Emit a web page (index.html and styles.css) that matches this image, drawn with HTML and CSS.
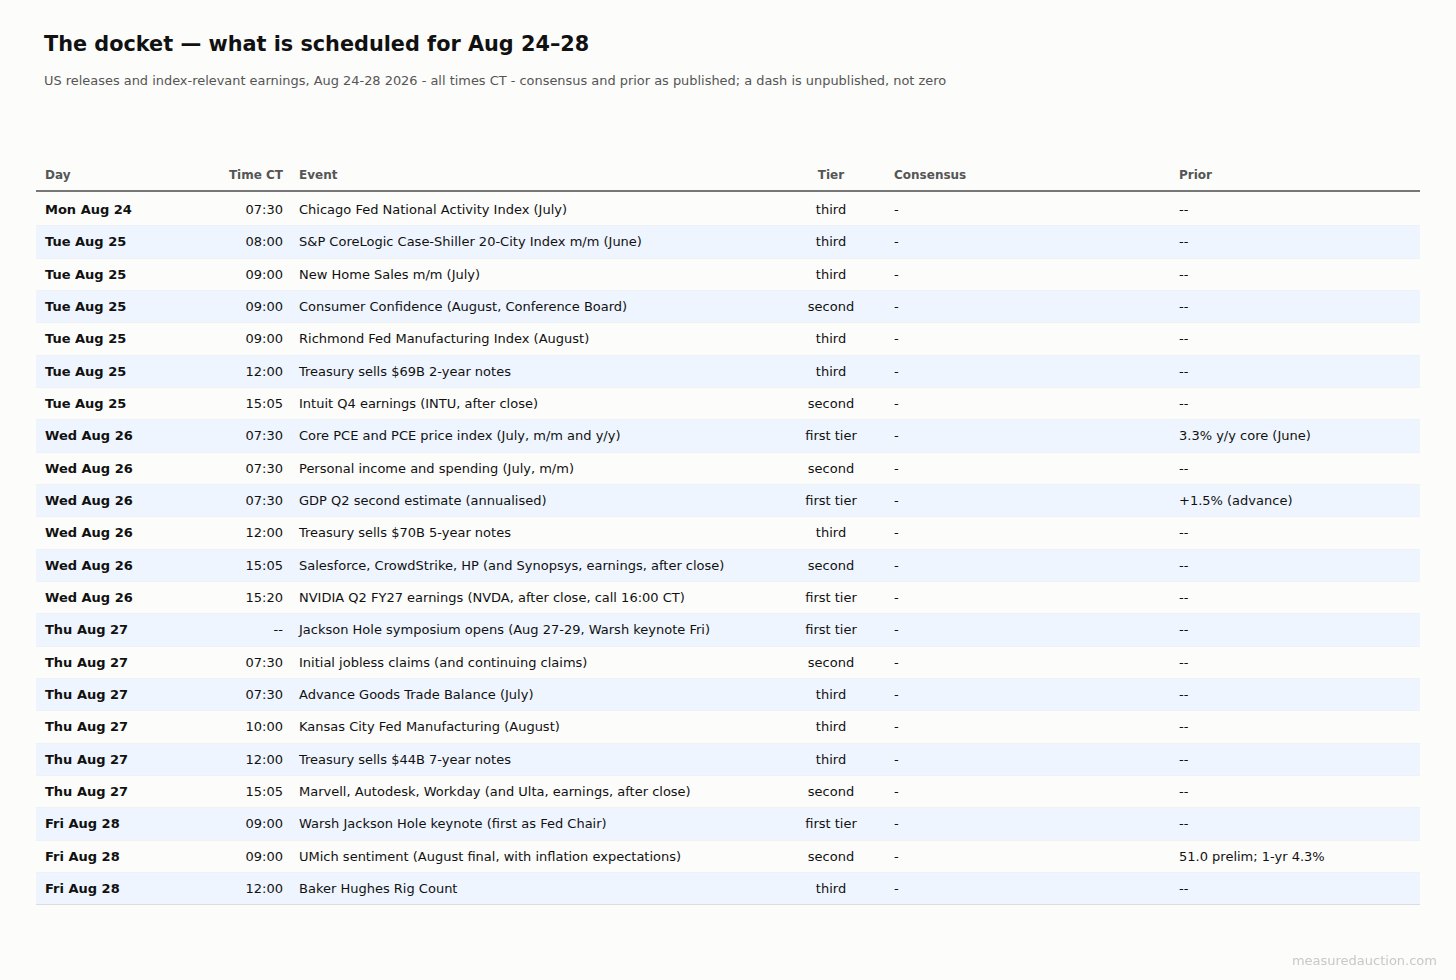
FILE: index.html
```html
<!DOCTYPE html>
<html lang="en">
<head>
<meta charset="utf-8">
<title>The docket</title>
<link rel="stylesheet" href="styles.css">
</head>
<body>
<div class="page">
  <header class="head">
    <h1 class="title">The docket — what is scheduled for Aug 24–28</h1>
    <p class="sub">US releases and index-relevant earnings, Aug 24-28 2026 - all times CT - consensus and prior as published; a dash is unpublished, not zero</p>
  </header>
  <table class="docket">
    <colgroup>
      <col class="c-day"><col class="c-time"><col class="c-event"><col class="c-tier"><col class="c-cons"><col class="c-prior">
    </colgroup>
    <thead>
      <tr><th class="l first">Day</th><th class="r">Time CT</th><th class="l">Event</th><th class="c">Tier</th><th class="l">Consensus</th><th class="l">Prior</th></tr>
    </thead>
    <tbody>
      <tr><td class="day">Mon Aug 24</td><td class="time">07:30</td><td>Chicago Fed National Activity Index (July)</td><td class="tier">third</td><td class="dash">-</td><td class="dash">--</td></tr>
      <tr><td class="day">Tue Aug 25</td><td class="time">08:00</td><td>S&amp;P CoreLogic Case-Shiller 20-City Index m/m (June)</td><td class="tier">third</td><td class="dash">-</td><td class="dash">--</td></tr>
      <tr><td class="day">Tue Aug 25</td><td class="time">09:00</td><td>New Home Sales m/m (July)</td><td class="tier">third</td><td class="dash">-</td><td class="dash">--</td></tr>
      <tr><td class="day">Tue Aug 25</td><td class="time">09:00</td><td>Consumer Confidence (August, Conference Board)</td><td class="tier">second</td><td class="dash">-</td><td class="dash">--</td></tr>
      <tr><td class="day">Tue Aug 25</td><td class="time">09:00</td><td>Richmond Fed Manufacturing Index (August)</td><td class="tier">third</td><td class="dash">-</td><td class="dash">--</td></tr>
      <tr><td class="day">Tue Aug 25</td><td class="time">12:00</td><td>Treasury sells $69B 2-year notes</td><td class="tier">third</td><td class="dash">-</td><td class="dash">--</td></tr>
      <tr><td class="day">Tue Aug 25</td><td class="time">15:05</td><td>Intuit Q4 earnings (INTU, after close)</td><td class="tier">second</td><td class="dash">-</td><td class="dash">--</td></tr>
      <tr><td class="day">Wed Aug 26</td><td class="time">07:30</td><td>Core PCE and PCE price index (July, m/m and y/y)</td><td class="tier">first tier</td><td class="dash">-</td><td>3.3% y/y core (June)</td></tr>
      <tr><td class="day">Wed Aug 26</td><td class="time">07:30</td><td>Personal income and spending (July, m/m)</td><td class="tier">second</td><td class="dash">-</td><td class="dash">--</td></tr>
      <tr><td class="day">Wed Aug 26</td><td class="time">07:30</td><td>GDP Q2 second estimate (annualised)</td><td class="tier">first tier</td><td class="dash">-</td><td>+1.5% (advance)</td></tr>
      <tr><td class="day">Wed Aug 26</td><td class="time">12:00</td><td>Treasury sells $70B 5-year notes</td><td class="tier">third</td><td class="dash">-</td><td class="dash">--</td></tr>
      <tr><td class="day">Wed Aug 26</td><td class="time">15:05</td><td>Salesforce, CrowdStrike, HP (and Synopsys, earnings, after close)</td><td class="tier">second</td><td class="dash">-</td><td class="dash">--</td></tr>
      <tr><td class="day">Wed Aug 26</td><td class="time">15:20</td><td>NVIDIA Q2 FY27 earnings (NVDA, after close, call 16:00 CT)</td><td class="tier">first tier</td><td class="dash">-</td><td class="dash">--</td></tr>
      <tr><td class="day">Thu Aug 27</td><td class="time dim">--</td><td>Jackson Hole symposium opens (Aug 27-29, Warsh keynote Fri)</td><td class="tier">first tier</td><td class="dash">-</td><td class="dash">--</td></tr>
      <tr><td class="day">Thu Aug 27</td><td class="time">07:30</td><td>Initial jobless claims (and continuing claims)</td><td class="tier">second</td><td class="dash">-</td><td class="dash">--</td></tr>
      <tr><td class="day">Thu Aug 27</td><td class="time">07:30</td><td>Advance Goods Trade Balance (July)</td><td class="tier">third</td><td class="dash">-</td><td class="dash">--</td></tr>
      <tr><td class="day">Thu Aug 27</td><td class="time">10:00</td><td>Kansas City Fed Manufacturing (August)</td><td class="tier">third</td><td class="dash">-</td><td class="dash">--</td></tr>
      <tr><td class="day">Thu Aug 27</td><td class="time">12:00</td><td>Treasury sells $44B 7-year notes</td><td class="tier">third</td><td class="dash">-</td><td class="dash">--</td></tr>
      <tr><td class="day">Thu Aug 27</td><td class="time">15:05</td><td>Marvell, Autodesk, Workday (and Ulta, earnings, after close)</td><td class="tier">second</td><td class="dash">-</td><td class="dash">--</td></tr>
      <tr><td class="day">Fri Aug 28</td><td class="time">09:00</td><td>Warsh Jackson Hole keynote (first as Fed Chair)</td><td class="tier">first tier</td><td class="dash">-</td><td class="dash">--</td></tr>
      <tr><td class="day">Fri Aug 28</td><td class="time">09:00</td><td>UMich sentiment (August final, with inflation expectations)</td><td class="tier">second</td><td class="dash">-</td><td>51.0 prelim; 1-yr 4.3%</td></tr>
      <tr><td class="day">Fri Aug 28</td><td class="time">12:00</td><td>Baker Hughes Rig Count</td><td class="tier">third</td><td class="dash">-</td><td class="dash">--</td></tr>
    </tbody>
  </table>
</div>
<div class="mark">measuredauction.com</div>
</body>
</html>
```

FILE: styles.css
```css
html, body {
  margin: 0;
  padding: 0;
  background: #fcfcfb;
}
body {
  font-family: "DejaVu Sans", "Liberation Sans", sans-serif;
  color: #111;
}
.page {
  padding: 32px 36px 0 36px;
}
.head {
  padding: 0 8px;
}
.title {
  margin: 0;
  font-size: 20.8px;
  line-height: 24px;
  font-weight: bold;
  color: #111;
}
.sub {
  margin: 17px 0 0 0;
  font-size: 12.93px;
  line-height: 15px;
  color: #555;
}
.docket {
  margin-top: 72px;
  width: 1384px;
  border-collapse: collapse;
  table-layout: fixed;
  font-size: 13px;
}
.c-day { width: 170px; }
.c-time { width: 85px; }
.c-event { width: 485px; }
.c-tier { width: 110px; }
.c-cons { width: 285px; }
.c-prior { width: 249px; }
.docket th {
  font-size: 12px;
  line-height: 14px;
  font-weight: bold;
  color: #555;
  padding: 8px 8px 8px 8px;
  border-bottom: 2px solid #777;
}
.docket th.l { text-align: left; }
.docket th.r { text-align: right; }
.docket th.c { text-align: center; }
.docket th.first { padding-left: 9px; }
.docket td {
  padding: 8px 8px;
  line-height: 15.33px;
  white-space: nowrap;
  border-bottom: 1px solid #eef1f5;
  color: #111;
}
.docket td.day { padding-left: 9px; }
.docket tbody tr:nth-child(even) td {
  background: #eef5fe;
}
.docket tbody tr:last-child td {
  border-bottom: 1px solid #dcdcdc;
}
.docket tbody tr:first-child td {
  padding-top: 10px;
}
.day { font-weight: bold; }
.time { text-align: right; }
.tier { text-align: center; }
.dash, .dim { color: #666; }
.mark {
  position: fixed;
  right: 19px;
  bottom: 12px;
  font-size: 13px;
  line-height: 15px;
  color: #c8c8c8;
}
```
